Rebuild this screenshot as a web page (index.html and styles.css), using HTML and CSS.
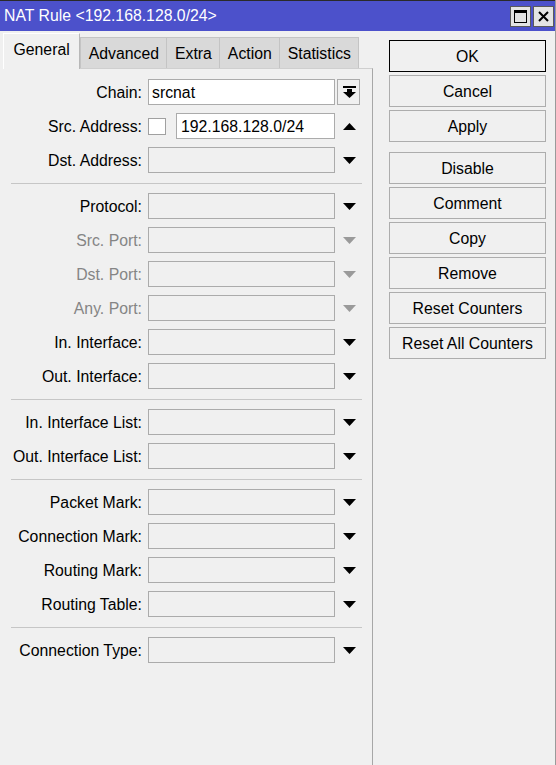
FILE: index.html
```html
<!DOCTYPE html>
<html>
<head>
<meta charset="utf-8">
<link rel="stylesheet" href="styles.css">
</head>
<body>
<div class="win">
  <div class="titlebar">
    <span class="title">NAT Rule &lt;192.168.128.0/24&gt;</span>
    <div class="tbtns">
      <div class="tbtn"><span class="maxico"></span></div>
      <div class="tbtn">
        <svg width="11" height="11" viewBox="0 0 11 11"><path d="M1 1L10 10M10 1L1 10" stroke="#000" stroke-width="2"/></svg>
      </div>
    </div>
  </div>
  <div class="main">
    <div class="tabctl">
      <div class="tabs">
        <div class="tab active">General</div>
        <div class="tab">Advanced</div>
        <div class="tab">Extra</div>
        <div class="tab">Action</div>
        <div class="tab">Statistics</div>
      </div>
      <div class="panel">
        <div class="row">
          <div class="lbl">Chain:</div>
          <div class="fld on">srcnat</div>
          <div class="arr"><div class="dd"><svg width="13" height="12" viewBox="0 0 13 12"><rect x="0" y="0" width="13" height="2"/><rect x="4" y="3" width="5" height="3"/><polygon points="0,6 13,6 6.5,12"/></svg></div></div>
        </div>
        <div class="row">
          <div class="lbl">Src. Address:</div>
          <div class="chk"></div>
          <div class="fld on short">192.168.128.0/24</div>
          <div class="arr"><svg width="13" height="7" viewBox="0 0 13 7"><polygon points="0,7 13,7 6.5,0"/></svg></div>
        </div>
        <div class="row">
          <div class="lbl">Dst. Address:</div>
          <div class="fld"></div>
          <div class="arr"><svg width="13" height="7" viewBox="0 0 13 7"><polygon points="0,0 13,0 6.5,7"/></svg></div>
        </div>
        <div class="sep"></div>
        <div class="row">
          <div class="lbl">Protocol:</div>
          <div class="fld"></div>
          <div class="arr"><svg width="13" height="7" viewBox="0 0 13 7"><polygon points="0,0 13,0 6.5,7"/></svg></div>
        </div>
        <div class="row dis">
          <div class="lbl">Src. Port:</div>
          <div class="fld"></div>
          <div class="arr"><svg width="13" height="7" viewBox="0 0 13 7"><polygon points="0,0 13,0 6.5,7"/></svg></div>
        </div>
        <div class="row dis">
          <div class="lbl">Dst. Port:</div>
          <div class="fld"></div>
          <div class="arr"><svg width="13" height="7" viewBox="0 0 13 7"><polygon points="0,0 13,0 6.5,7"/></svg></div>
        </div>
        <div class="row dis">
          <div class="lbl">Any. Port:</div>
          <div class="fld"></div>
          <div class="arr"><svg width="13" height="7" viewBox="0 0 13 7"><polygon points="0,0 13,0 6.5,7"/></svg></div>
        </div>
        <div class="row">
          <div class="lbl">In. Interface:</div>
          <div class="fld"></div>
          <div class="arr"><svg width="13" height="7" viewBox="0 0 13 7"><polygon points="0,0 13,0 6.5,7"/></svg></div>
        </div>
        <div class="row">
          <div class="lbl">Out. Interface:</div>
          <div class="fld"></div>
          <div class="arr"><svg width="13" height="7" viewBox="0 0 13 7"><polygon points="0,0 13,0 6.5,7"/></svg></div>
        </div>
        <div class="sep"></div>
        <div class="row">
          <div class="lbl">In. Interface List:</div>
          <div class="fld"></div>
          <div class="arr"><svg width="13" height="7" viewBox="0 0 13 7"><polygon points="0,0 13,0 6.5,7"/></svg></div>
        </div>
        <div class="row">
          <div class="lbl">Out. Interface List:</div>
          <div class="fld"></div>
          <div class="arr"><svg width="13" height="7" viewBox="0 0 13 7"><polygon points="0,0 13,0 6.5,7"/></svg></div>
        </div>
        <div class="sep"></div>
        <div class="row">
          <div class="lbl">Packet Mark:</div>
          <div class="fld"></div>
          <div class="arr"><svg width="13" height="7" viewBox="0 0 13 7"><polygon points="0,0 13,0 6.5,7"/></svg></div>
        </div>
        <div class="row">
          <div class="lbl">Connection Mark:</div>
          <div class="fld"></div>
          <div class="arr"><svg width="13" height="7" viewBox="0 0 13 7"><polygon points="0,0 13,0 6.5,7"/></svg></div>
        </div>
        <div class="row">
          <div class="lbl">Routing Mark:</div>
          <div class="fld"></div>
          <div class="arr"><svg width="13" height="7" viewBox="0 0 13 7"><polygon points="0,0 13,0 6.5,7"/></svg></div>
        </div>
        <div class="row">
          <div class="lbl">Routing Table:</div>
          <div class="fld"></div>
          <div class="arr"><svg width="13" height="7" viewBox="0 0 13 7"><polygon points="0,0 13,0 6.5,7"/></svg></div>
        </div>
        <div class="sep"></div>
        <div class="row">
          <div class="lbl">Connection Type:</div>
          <div class="fld"></div>
          <div class="arr"><svg width="13" height="7" viewBox="0 0 13 7"><polygon points="0,0 13,0 6.5,7"/></svg></div>
        </div>
      </div>
    </div>
    <div class="side">
      <div class="btn default">OK</div>
      <div class="btn">Cancel</div>
      <div class="btn">Apply</div>
      <div class="btn gap">Disable</div>
      <div class="btn">Comment</div>
      <div class="btn">Copy</div>
      <div class="btn">Remove</div>
      <div class="btn">Reset Counters</div>
      <div class="btn">Reset All Counters</div>
    </div>
  </div>
</div>
</body>
</html>
```
FILE: styles.css
```css
html, body {
  margin: 0;
  padding: 0;
  height: 100%;
  background: #f0f0f0;
}
body {
  font-family: "Liberation Sans", Arial, sans-serif;
  font-size: 15.8px;
  color: #000;
}
.win {
  width: 556px;
  height: 765px;
  box-sizing: border-box;
  border-right: 1px solid #9a9a9a;
  display: flex;
  flex-direction: column;
  overflow: hidden;
}
.titlebar {
  height: 31px;
  box-sizing: border-box;
  border-top: 1px solid #2a2a2a;
  background: #4c51cb;
  display: flex;
  align-items: center;
  justify-content: space-between;
  padding: 0 1px 1px 4px;
  flex: none;
}
.title {
  color: #fff;
  white-space: nowrap;
}
.tbtns {
  display: flex;
  gap: 2px;
  margin-top: 2px;
}
.tbtn {
  width: 21px;
  height: 21px;
  box-sizing: border-box;
  border: 1px solid #5a5a5a;
  background: #e4e4e4;
  display: flex;
  align-items: center;
  justify-content: center;
}
.maxico {
  width: 13px;
  height: 13px;
  box-sizing: border-box;
  border: 1px solid #000;
  border-top-width: 3px;
}
.main {
  flex: 1;
  display: flex;
  min-height: 0;
}
.tabctl {
  width: 370px;
  margin-left: 3px;
  display: flex;
  flex-direction: column;
}
.tabs {
  display: flex;
  align-items: flex-end;
  height: 37px;
  flex: none;
}
.tab {
  height: 31px;
  box-sizing: border-box;
  padding: 1px 7.5px 0 7.5px;
  background: #d9d9d9;
  border: 1px solid #c4c4c4;
  border-bottom: none;
  margin-left: -1px;
  display: flex;
  align-items: center;
  white-space: nowrap;
}
.tab.active {
  height: 36px;
  margin-left: 0;
  margin-right: 1px;
  margin-bottom: -1px;
  padding: 0 9.5px 3px 9.5px;
  background: #f0f0f0;
  border-color: #ffffff #b8b8b8 #f0f0f0 #ffffff;
  position: relative;
  z-index: 1;
}
.panel {
  flex: 1;
  border-top: 1px solid #cfcfcf;
  border-right: 1px solid #a7a7a7;
  padding: 10px 10px 0 8px;
  display: flex;
  flex-direction: column;
  gap: 8px;
}
.row {
  display: flex;
  align-items: center;
  height: 26px;
}
.lbl {
  width: 131px;
  margin-right: 6px;
  padding-top: 2px;
  text-align: right;
  white-space: nowrap;
  flex: none;
}
.fld {
  width: 187px;
  height: 26px;
  box-sizing: border-box;
  border: 1px solid #ababab;
  background: #f0f0f0;
  padding: 1px 0 0 3px;
  line-height: 24px;
  flex: none;
}
.fld.on {
  background: #fff;
}
.fld.short {
  width: 159px;
  padding-left: 4px;
}
.chk {
  width: 18px;
  height: 17px;
  box-sizing: border-box;
  border: 1px solid #a0a0a0;
  background: #fff;
  margin-right: 10px;
  flex: none;
}
.arr {
  width: 23px;
  margin-left: 2px;
  height: 26px;
  display: flex;
  align-items: center;
  justify-content: center;
  flex: none;
}
.arr svg {
  fill: #000;
  margin-left: 2px;
}
.dd {
  width: 23px;
  height: 26px;
  box-sizing: border-box;
  border: 1px solid #ababab;
  background: #f0f0f0;
  display: flex;
  align-items: center;
  justify-content: center;
}
.dd svg {
  margin-left: 1px;
}
.dis .lbl {
  color: #858585;
}
.dis .arr svg {
  fill: #9a9a9a;
}
.sep {
  height: 1px;
  background: #c6c6c6;
  margin: 2px 0 1px 0;
  flex: none;
}
.side {
  flex: 1;
  padding: 9px 0 0 16px;
  display: flex;
  flex-direction: column;
  gap: 3px;
}
.btn {
  width: 157px;
  height: 32px;
  box-sizing: border-box;
  border: 1px solid #adadad;
  background: #f0f0f0;
  display: flex;
  align-items: center;
  justify-content: center;
  padding-top: 1px;
  white-space: nowrap;
}
.btn.default {
  border-color: #000;
}
.btn.gap {
  margin-top: 7px;
}
```
